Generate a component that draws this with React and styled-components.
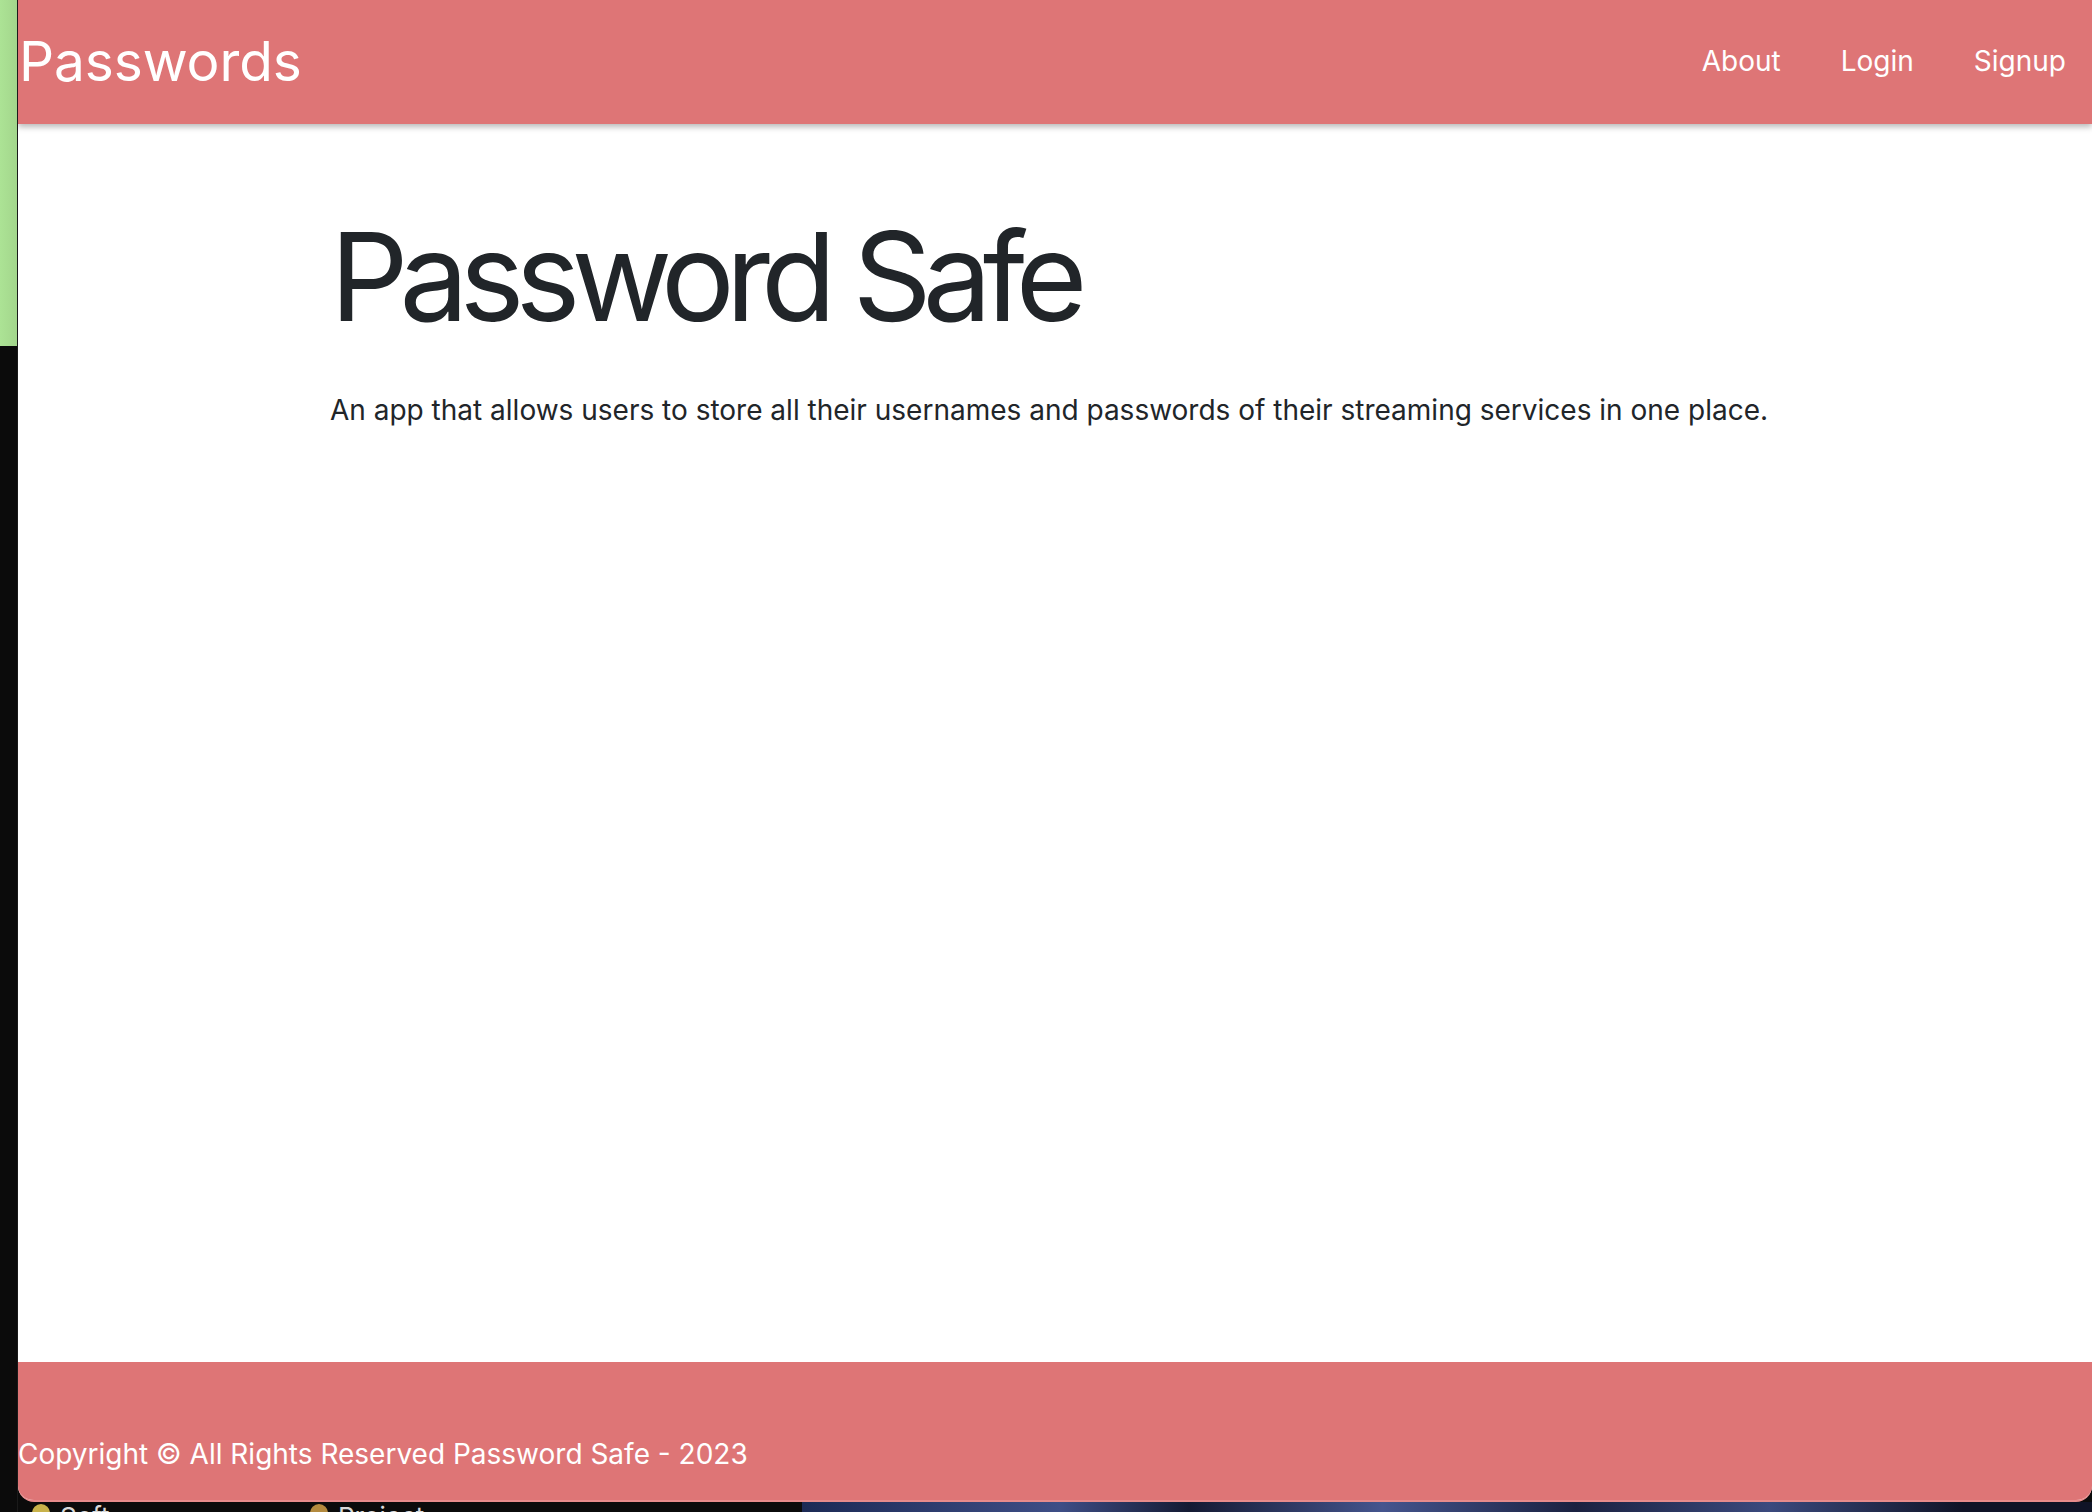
import React from "react";
import styled, { createGlobalStyle } from "styled-components";

const Global = createGlobalStyle`
  html, body { margin: 0; padding: 0; }
  body {
    background: #0b0b0b;
    font-family: Inter, "Noto Sans", "Liberation Sans", sans-serif;
    overflow: hidden;
  }
  * { box-sizing: border-box; }
`;

const Desktop = styled.div`
  width: 2092px;
  height: 1512px;
  display: grid;
  grid-template-columns: 18px 1fr;
  grid-template-rows: 1502px 10px;
  background: #0b0b0b;
  overflow: hidden;
`;

const SideStrip = styled.div`
  grid-row: 1 / 3;
  display: flex;
  flex-direction: column;
  border-right: 1px solid #1a1a1a;
`;

const GreenPane = styled.div`
  height: 346px;
  background: linear-gradient(90deg, #ace395, #a3d68c);
`;

const Window = styled.div`
  display: flex;
  flex-direction: column;
  background: #ffffff;
  border-radius: 0 0 16px 16px;
  overflow: hidden;
  border-bottom: 2px solid #e88b8b;
`;

const Navbar = styled.nav`
  height: 124px;
  flex: none;
  background: #de7576;
  display: flex;
  align-items: center;
  justify-content: space-between;
  padding: 0 26px 0 1px;
  box-shadow: 0 3px 6px rgba(0, 0, 0, 0.28);
  position: relative;
  z-index: 1;
`;

const Brand = styled.a`
  color: #ffffff;
  font-size: 55px;
  font-weight: 400;
  text-decoration: none;
  letter-spacing: -0.1px;
  margin-top: -2px;
`;

const NavLinks = styled.div`
  display: flex;
  align-items: center;
  gap: 60px;
`;

const NavLink = styled.a`
  color: #ffffff;
  font-size: 28px;
  text-decoration: none;
  margin-top: -2px;
`;

const Main = styled.main`
  flex: 1;
  padding: 79px 0 0 312px;
`;

const Title = styled.h1`
  margin: 0;
  font-size: 123px;
  font-weight: 400;
  color: #212529;
  letter-spacing: -9px;
  line-height: 1.2;
`;

const Lead = styled.p`
  margin: 38px 0 0 0;
  font-size: 28px;
  color: #212529;
  line-height: 1.5;
`;

const Footer = styled.footer`
  height: 138px;
  flex: none;
  background: #de7576;
  display: flex;
  align-items: flex-end;
  padding-bottom: 25px;
`;

const FooterText = styled.p`
  margin: 0;
  color: #ffffff;
  font-size: 28px;
  line-height: 1.5;
`;

const Dock = styled.div`
  display: flex;
  align-items: flex-start;
  gap: 8px;
  padding-left: 14px;
  background: #0b0b0b;
  overflow: hidden;
`;

const DockItem = styled.div`
  display: flex;
  align-items: flex-start;
  gap: 10px;
  width: ${(p) => p.w}px;
  color: #d8d8d8;
  font-size: 26px;
  line-height: 1;
  height: 10px;
  overflow: hidden;
`;

const Dot = styled.span`
  width: 18px;
  height: 18px;
  border-radius: 50%;
  background: ${(p) => p.c};
  margin-top: 2px;
  flex: none;
`;

const DockLabel = styled.span`
  padding-top: 2px;
`;

const Wallpaper = styled.div`
  flex: 1;
  height: 10px;
  margin-left: 284px;
  background: linear-gradient(90deg, #1c2a55, #3e4e86 20%, #141a33 30%, #45558e 45%, #1a2140 60%, #3b4a7e 75%, #0f1326 90%);
`;

export default function App() {
  return (
    <>
      <Global />
      <Desktop>
        <SideStrip>
          <GreenPane />
        </SideStrip>
        <Window>
          <Navbar>
            <Brand href="#">Passwords</Brand>
            <NavLinks>
              <NavLink href="#">About</NavLink>
              <NavLink href="#">Login</NavLink>
              <NavLink href="#">Signup</NavLink>
            </NavLinks>
          </Navbar>
          <Main>
            <Title>Password Safe</Title>
            <Lead>
              An app that allows users to store all their usernames and passwords of their streaming services in one place.
            </Lead>
          </Main>
          <Footer>
            <FooterText>Copyright © All Rights Reserved Password Safe - 2023</FooterText>
          </Footer>
        </Window>
        <Dock>
          <DockItem w={270}>
            <Dot c="#c8b24a" />
            <DockLabel>Soft</DockLabel>
          </DockItem>
          <DockItem w={200}>
            <Dot c="#b38a3e" />
            <DockLabel>Project</DockLabel>
          </DockItem>
          <Wallpaper />
        </Dock>
      </Desktop>
    </>
  );
}
